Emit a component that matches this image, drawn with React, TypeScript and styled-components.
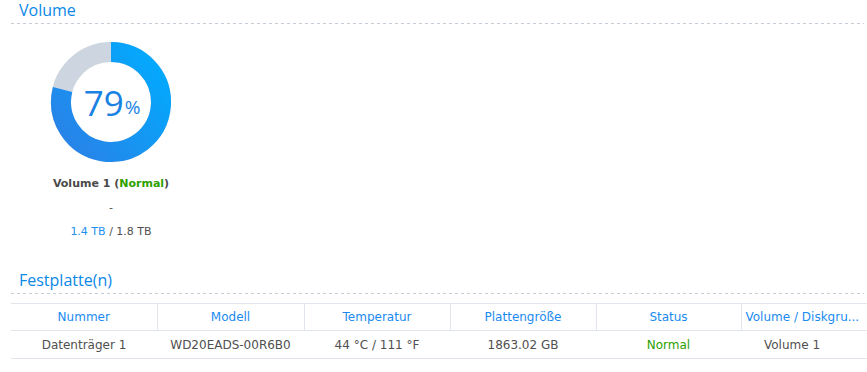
import React from "react";
import styled, { createGlobalStyle } from "styled-components";

const GlobalStyle = createGlobalStyle`
  html, body {
    margin: 0;
    padding: 0;
    background: #fff;
    overflow: hidden;
  }
  body {
    font-family: "DejaVu Sans", Verdana, sans-serif;
    color: #505050;
  }
`;

interface Disk {
  nummer: string;
  modell: string;
  temperatur: string;
  groesse: string;
  status: string;
  volume: string;
}

const columns = [
  { label: "Nummer", width: 146 },
  { label: "Modell", width: 147 },
  { label: "Temperatur", width: 146 },
  { label: "Plattengröße", width: 146 },
  { label: "Status", width: 145 },
  { label: "Volume / Diskgru...", width: 126 },
];

const disks: Disk[] = [
  {
    nummer: "Datenträger 1",
    modell: "WD20EADS-00R6B0",
    temperatur: "44 °C / 111 °F",
    groesse: "1863.02 GB",
    status: "Normal",
    volume: "Volume 1",
  },
];

// arc from 12 o'clock clockwise, ring drawn as a stroke
const arcPath = (cx: number, cy: number, r: number, percent: number) => {
  const a = (percent / 100) * Math.PI * 2;
  const x = cx + r * Math.sin(a);
  const y = cy - r * Math.cos(a);
  const large = percent > 50 ? 1 : 0;
  return `M ${cx} ${cy - r} A ${r} ${r} 0 ${large} 1 ${x} ${y}`;
};

const Donut = ({ percent }: { percent: number }) => {
  return (
    <DonutBox>
      <svg width="122" height="122" viewBox="0 0 122 122">
        <defs>
          <linearGradient
            id="ring"
            gradientUnits="userSpaceOnUse"
            x1="110"
            y1="10"
            x2="10"
            y2="90"
          >
            <stop offset="0" stopColor="#00acff" />
            <stop offset="1" stopColor="#2784e8" />
          </linearGradient>
        </defs>
        <circle cx="61" cy="61" r="50" fill="none" stroke="#cdd6e0" strokeWidth="20" />
        <path
          d={arcPath(61, 61, 50, percent)}
          fill="none"
          stroke="url(#ring)"
          strokeWidth="20"
        />
      </svg>
      <DonutLabel>
        {percent}
        <Percent>%</Percent>
      </DonutLabel>
    </DonutBox>
  );
};

const App = () => {
  return (
    <Page>
      <GlobalStyle />
      <Section>
        <Title>Volume</Title>
        <Dashed />
        <VolumeCard>
          <Donut percent={79} />
          <VolumeName>
            Volume 1 (<Green>Normal</Green>)
          </VolumeName>
          <Info>-</Info>
          <Info>
            <Blue>1.4 TB</Blue> / 1.8 TB
          </Info>
        </VolumeCard>
      </Section>
      <Section>
        <Title>Festplatte(n)</Title>
        <Dashed />
        <Table>
          <colgroup>
            {columns.map((col) => (
              <col key={col.label} style={{ width: col.width }} />
            ))}
          </colgroup>
          <thead>
            <tr>
              {columns.map((col) => (
                <Th key={col.label}>{col.label}</Th>
              ))}
            </tr>
          </thead>
          <tbody>
            {disks.map((d) => (
              <tr key={d.nummer}>
                <Td>{d.nummer}</Td>
                <Td>{d.modell}</Td>
                <Td>{d.temperatur}</Td>
                <Td>{d.groesse}</Td>
                <Td $status>{d.status}</Td>
                <Td>{d.volume}</Td>
              </tr>
            ))}
          </tbody>
        </Table>
      </Section>
    </Page>
  );
};

export default App;

const Page = styled.div`
  width: 867px;
  height: 372px;
  overflow: hidden;
`;

const Section = styled.section`
  padding-left: 11px;
`;

const Title = styled.div`
  font-family: "Open Sans", sans-serif;
  font-size: 16px;
  color: #0a88e8;
  padding-left: 8px;
  height: 23px;
  line-height: 20px;
`;

const Dashed = styled.div`
  height: 1px;
  margin-right: 3px;
  background: repeating-linear-gradient(
    to right,
    #c5ced8 0,
    #c5ced8 3px,
    transparent 3px,
    transparent 6px
  );
`;

const VolumeCard = styled.div`
  width: 200px;
  display: flex;
  flex-direction: column;
  align-items: center;
  padding-top: 17px;
  padding-bottom: 31px;
`;

const DonutBox = styled.div`
  position: relative;
  width: 122px;
  height: 122px;
`;

const DonutLabel = styled.div`
  position: absolute;
  inset: 0;
  display: flex;
  align-items: center;
  justify-content: center;
  font-family: "Open Sans", sans-serif;
  font-size: 35px;
  color: #1a82e2;
  padding-left: 2px;
`;

const Percent = styled.span`
  font-size: 19px;
  margin-top: 9px;
  margin-left: 1px;
`;

const VolumeName = styled.div`
  margin-top: 14px;
  font-size: 11px;
  font-weight: bold;
  color: #4a4a4a;
  line-height: 14px;
`;

const Green = styled.span`
  color: #2ea000;
`;

const Blue = styled.span`
  color: #1f8ff0;
`;

const Info = styled.div`
  font-size: 11px;
  line-height: 14px;
  margin-top: 10px;
  color: #505050;
`;

const Table = styled.table`
  margin-top: 9px;
  border-collapse: collapse;
  table-layout: fixed;
  width: 856px;
  font-size: 12px;
`;

const Th = styled.th`
  height: 26px;
  padding: 0;
  font-weight: normal;
  color: #1a8af0;
  border-top: 1px solid #e0e6ec;
  border-bottom: 1px solid #e0e6ec;
  border-left: 1px solid #e0e6ec;
  white-space: nowrap;
  overflow: hidden;
  &:first-child {
    border-left: none;
  }
  &:last-child {
    text-align: left;
    padding-left: 4px;
  }
`;

const Td = styled.td<{ $status?: boolean }>`
  height: 27px;
  padding: 0;
  text-align: center;
  color: ${(p) => (p.$status ? "#2ea000" : "#505050")};
  border-bottom: 1px solid #e0e6ec;
  white-space: nowrap;
  &:last-child {
    padding-right: 24px;
  }
`;
